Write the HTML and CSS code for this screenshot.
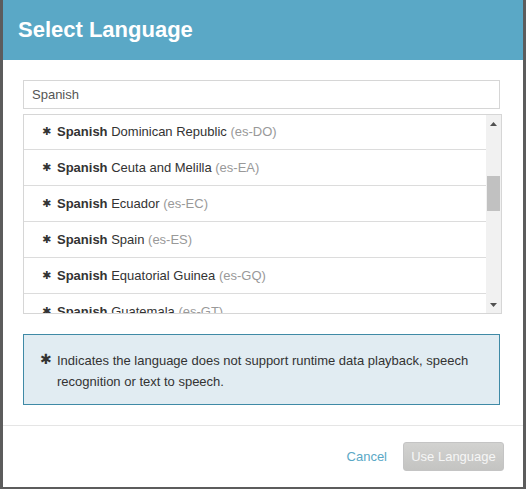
FILE: index.html
```html
<!DOCTYPE html>
<html lang="en">
<head>
    <meta charset="UTF-8">
    <meta name="viewport" content="width=device-width, initial-scale=1.0">
    <title>Select Language</title>
    <link rel="stylesheet" href="styles.css">
</head>
<body>
    <div class="modal">
        <div class="modal-header">
            <h1>Select Language</h1>
        </div>
        <div class="modal-body">
            <input type="text" class="search" value="Spanish">
            <div class="list">
                <ul class="rows">
                    <li><span class="star">&#10033;</span><b>Spanish</b> Dominican Republic <span class="code">(es-DO)</span></li>
                    <li><span class="star">&#10033;</span><b>Spanish</b> Ceuta and Melilla <span class="code">(es-EA)</span></li>
                    <li><span class="star">&#10033;</span><b>Spanish</b> Ecuador <span class="code">(es-EC)</span></li>
                    <li><span class="star">&#10033;</span><b>Spanish</b> Spain <span class="code">(es-ES)</span></li>
                    <li><span class="star">&#10033;</span><b>Spanish</b> Equatorial Guinea <span class="code">(es-GQ)</span></li>
                    <li><span class="star">&#10033;</span><b>Spanish</b> Guatemala <span class="code">(es-GT)</span></li>
                    <li><span class="star">&#10033;</span><b>Spanish</b> Honduras <span class="code">(es-HN)</span></li>
                </ul>
                <div class="scrollbar">
                    <div class="arrow">
                        <svg width="7" height="4" viewBox="0 0 7 4"><path d="M0 4 L3.5 0 L7 4 Z" fill="#505050"/></svg>
                    </div>
                    <div class="track"><div class="thumb"></div></div>
                    <div class="arrow">
                        <svg width="7" height="4" viewBox="0 0 7 4"><path d="M0 0 L3.5 4 L7 0 Z" fill="#505050"/></svg>
                    </div>
                </div>
            </div>
            <div class="note">
                <span class="note-star">&#10033;</span>
                <p>Indicates the language does not support runtime data playback, speech recognition or text to speech.</p>
            </div>
        </div>
        <div class="modal-footer">
            <a href="#" class="cancel">Cancel</a>
            <button class="use" disabled>Use Language</button>
        </div>
    </div>
</body>
</html>
```

FILE: styles.css
```css
body{
    margin: 0;
    background-color: #5c5c5c;
    font-family: "Liberation Sans", Arial, sans-serif;
    color: #333;
}
.modal{
    margin-left: 3px;
    width: 520px;
    height: 487px;
    background-color: #fff;
    display: flex;
    flex-direction: column;
}
.modal-header{
    height: 60px;
    background-color: #5aa8c6;
    padding: 0 15px;
    display: flex;
    align-items: center;
}
.modal-header h1{
    margin: 0;
    color: #fff;
    font-size: 22px;
    font-weight: bold;
}
.modal-body{
    padding: 20px 21px 20px 20px;
    display: flex;
    flex-direction: column;
    border-bottom: 1px solid #e5e5e5;
}
.search{
    box-sizing: border-box;
    height: 29px;
    width: 477px;
    margin: 0 0 5px 0;
    padding: 0 8px;
    border: 1px solid #d6d6d6;
    font-family: "Liberation Sans", Arial, sans-serif;
    font-size: 13px;
    color: #555;
    outline: none;
}
.list{
    height: 198px;
    border: 1px solid #d6d6d6;
    display: flex;
    overflow: hidden;
}
.rows{
    flex: 1;
    list-style-type: none;
    margin: -1px 0 0 0;
    padding: 0;
}
.rows li{
    height: 35px;
    border-bottom: 1px solid #dcdcdc;
    display: flex;
    align-items: center;
    padding-left: 18px;
    font-size: 13px;
    white-space: pre;
}
.rows b{
    color: #333;
}
.star{
    flex-shrink: 0;
    width: 15px;
    font-family: "DejaVu Sans", sans-serif;
    font-size: 11px;
}
.code{
    color: #999;
}
.scrollbar{
    width: 15px;
    background-color: #f1f1f1;
    display: flex;
    flex-direction: column;
}
.arrow{
    height: 17px;
    display: flex;
    align-items: center;
    justify-content: center;
}
.track{
    flex: 1;
}
.thumb{
    margin: 44px 1px 0 1px;
    height: 35px;
    background-color: #c1c1c1;
}
.note{
    margin-top: 20px;
    width: 477px;
    height: 71px;
    box-sizing: border-box;
    background-color: #e1ecf2;
    border: 1px solid #3f8aa6;
    display: flex;
    align-items: flex-start;
    padding: 15px 10px 0 16px;
}
.note-star{
    flex-shrink: 0;
    width: 17px;
    font-family: "DejaVu Sans", sans-serif;
    font-size: 14px;
    line-height: 19px;
}
.note p{
    margin: 0;
    font-size: 13px;
    line-height: 21px;
    color: #333;
}
.modal-footer{
    flex: 1;
    display: flex;
    align-items: center;
    justify-content: flex-end;
    padding-right: 19px;
}
.cancel{
    color: #5aa8c6;
    text-decoration: none;
    font-size: 13px;
    margin-right: 16px;
}
.use{
    height: 29px;
    width: 101px;
    padding: 0;
    border: 1px solid #c4c4c4;
    border-radius: 3px;
    background: linear-gradient(#d2d2d0, #c4c4c2);
    color: #f6f6f6;
    font-family: "Liberation Sans", Arial, sans-serif;
    font-size: 13px;
}
```
